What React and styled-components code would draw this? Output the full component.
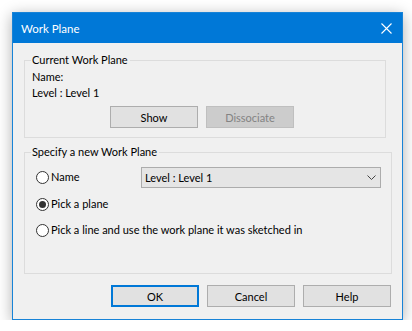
import React from "react";
import styled, { createGlobalStyle } from "styled-components";

const Global = createGlobalStyle`
  html, body { margin: 0; padding: 0; background: #ffffff; }
  body { font-family: Lato, "Noto Sans", sans-serif; font-size: 11px; color: #000; }
`;

const Page = styled.div`
  padding: 12px 0 0 12px;
`;

const Window = styled.div`
  width: 389px;
  border: 1px solid #1883d7;
  background: #f0f0f0;
  box-shadow: 0 3px 14px rgba(0, 0, 0, 0.32);
`;

const TitleBar = styled.div`
  height: 30px;
  background: #0078d7;
  display: flex;
  align-items: center;
  justify-content: space-between;
  padding: 0 10px 0 8px;
  color: #fff;
  font-size: 11.5px;
`;

const Content = styled.div`
  padding: 9px 10px 12px 11px;
  display: flex;
  flex-direction: column;
`;

const Group = styled.fieldset`
  margin: ${(p) => p.$mt || 0}px ${(p) => p.$mr || 0}px 0 0;
  padding: 0 8px ${(p) => p.$pb}px 7px;
  border: 1px solid #dcdcdc;
  min-width: 0;
`;

const Legend = styled.legend`
  padding: 0 2px 0 1px;
  margin-left: -1px;
  line-height: 16px;
  font-size: 11px;
`;

const Line = styled.div`
  line-height: 16px;
  height: 16px;
  margin-top: ${(p) => p.$mt || 0}px;
`;

const ButtonRow = styled.div`
  display: flex;
  gap: 8px;
  justify-content: ${(p) => p.$justify || "flex-start"};
  padding-left: ${(p) => p.$pl || 0}px;
  padding-right: ${(p) => p.$pr || 0}px;
  margin-top: ${(p) => p.$mt || 0}px;
`;

const Button = styled.div`
  box-sizing: border-box;
  width: 88px;
  height: 22px;
  display: flex;
  align-items: center;
  justify-content: center;
  background: ${(p) => (p.$disabled ? "#cccccc" : "#e1e1e1")};
  border: ${(p) => (p.$default ? "2px solid #0078d7" : p.$disabled ? "1px solid #bfbfbf" : "1px solid #adadad")};
  color: ${(p) => (p.$disabled ? "#838383" : "#000")};
  font-size: 11px;
`;

const RadioRow = styled.div`
  display: flex;
  align-items: center;
  height: ${(p) => p.$h || 16}px;
  margin-top: ${(p) => p.$mt || 0}px;
  margin-left: 4px;
`;

const RadioCircle = styled.span`
  box-sizing: border-box;
  width: 13px;
  height: 13px;
  border-radius: 50%;
  border: 1px solid #333;
  background: #fff;
  display: flex;
  align-items: center;
  justify-content: center;
  margin-right: 2px;
  flex: none;
  &::after {
    content: "";
    display: ${(p) => (p.$checked ? "block" : "none")};
    width: 7px;
    height: 7px;
    border-radius: 50%;
    background: #333;
  }
`;

const Label = styled.span`
  line-height: 16px;
  width: ${(p) => (p.$w ? p.$w + "px" : "auto")};
`;

const Select = styled.div`
  box-sizing: border-box;
  width: 240px;
  height: 21px;
  border: 1px solid #acacac;
  background: #e5e5e5;
  display: flex;
  align-items: center;
  justify-content: space-between;
  padding: 0 4px 0 3px;
`;

const Radio = ({ checked, children, w }) => (
  <>
    <RadioCircle $checked={checked} />
    <Label $w={w}>{children}</Label>
  </>
);

export default function App() {
  return (
    <>
      <Global />
      <Page>
        <Window>
          <TitleBar>
            <span>Work Plane</span>
            <svg width="11" height="11" viewBox="0 0 11 11">
              <path d="M0.5 0.5 L10.5 10.5 M10.5 0.5 L0.5 10.5" stroke="#fff" strokeWidth="1.1" fill="none" />
            </svg>
          </TitleBar>
          <Content>
            <Group $pb={9} $mr={6}>
              <Legend>Current Work Plane</Legend>
              <Line $mt={1}>Name:</Line>
              <Line>Level : Level 1</Line>
              <ButtonRow $pl={78} $mt={5}>
                <Button>Show</Button>
                <Button $disabled>Dissociate</Button>
              </ButtonRow>
            </Group>
            <Group $pb={35} $mt={6}>
              <Legend>Specify a new Work Plane</Legend>
              <RadioRow $h={22} $mt={6}>
                <Radio w={90}>Name</Radio>
                <Select>
                  <span>Level : Level 1</span>
                  <svg width="9" height="5" viewBox="0 0 9 5">
                    <path d="M0.5 0.5 L4.5 4.5 L8.5 0.5" stroke="#444" strokeWidth="1" fill="none" />
                  </svg>
                </Select>
              </RadioRow>
              <RadioRow $mt={8}>
                <Radio checked>Pick a plane</Radio>
              </RadioRow>
              <RadioRow $mt={10}>
                <Radio>Pick a line and use the work plane it was sketched in</Radio>
              </RadioRow>
            </Group>
            <ButtonRow $justify="flex-end" $pr={1} $mt={11}>
              <Button $default>OK</Button>
              <Button>Cancel</Button>
              <Button>Help</Button>
            </ButtonRow>
          </Content>
        </Window>
      </Page>
    </>
  );
}
